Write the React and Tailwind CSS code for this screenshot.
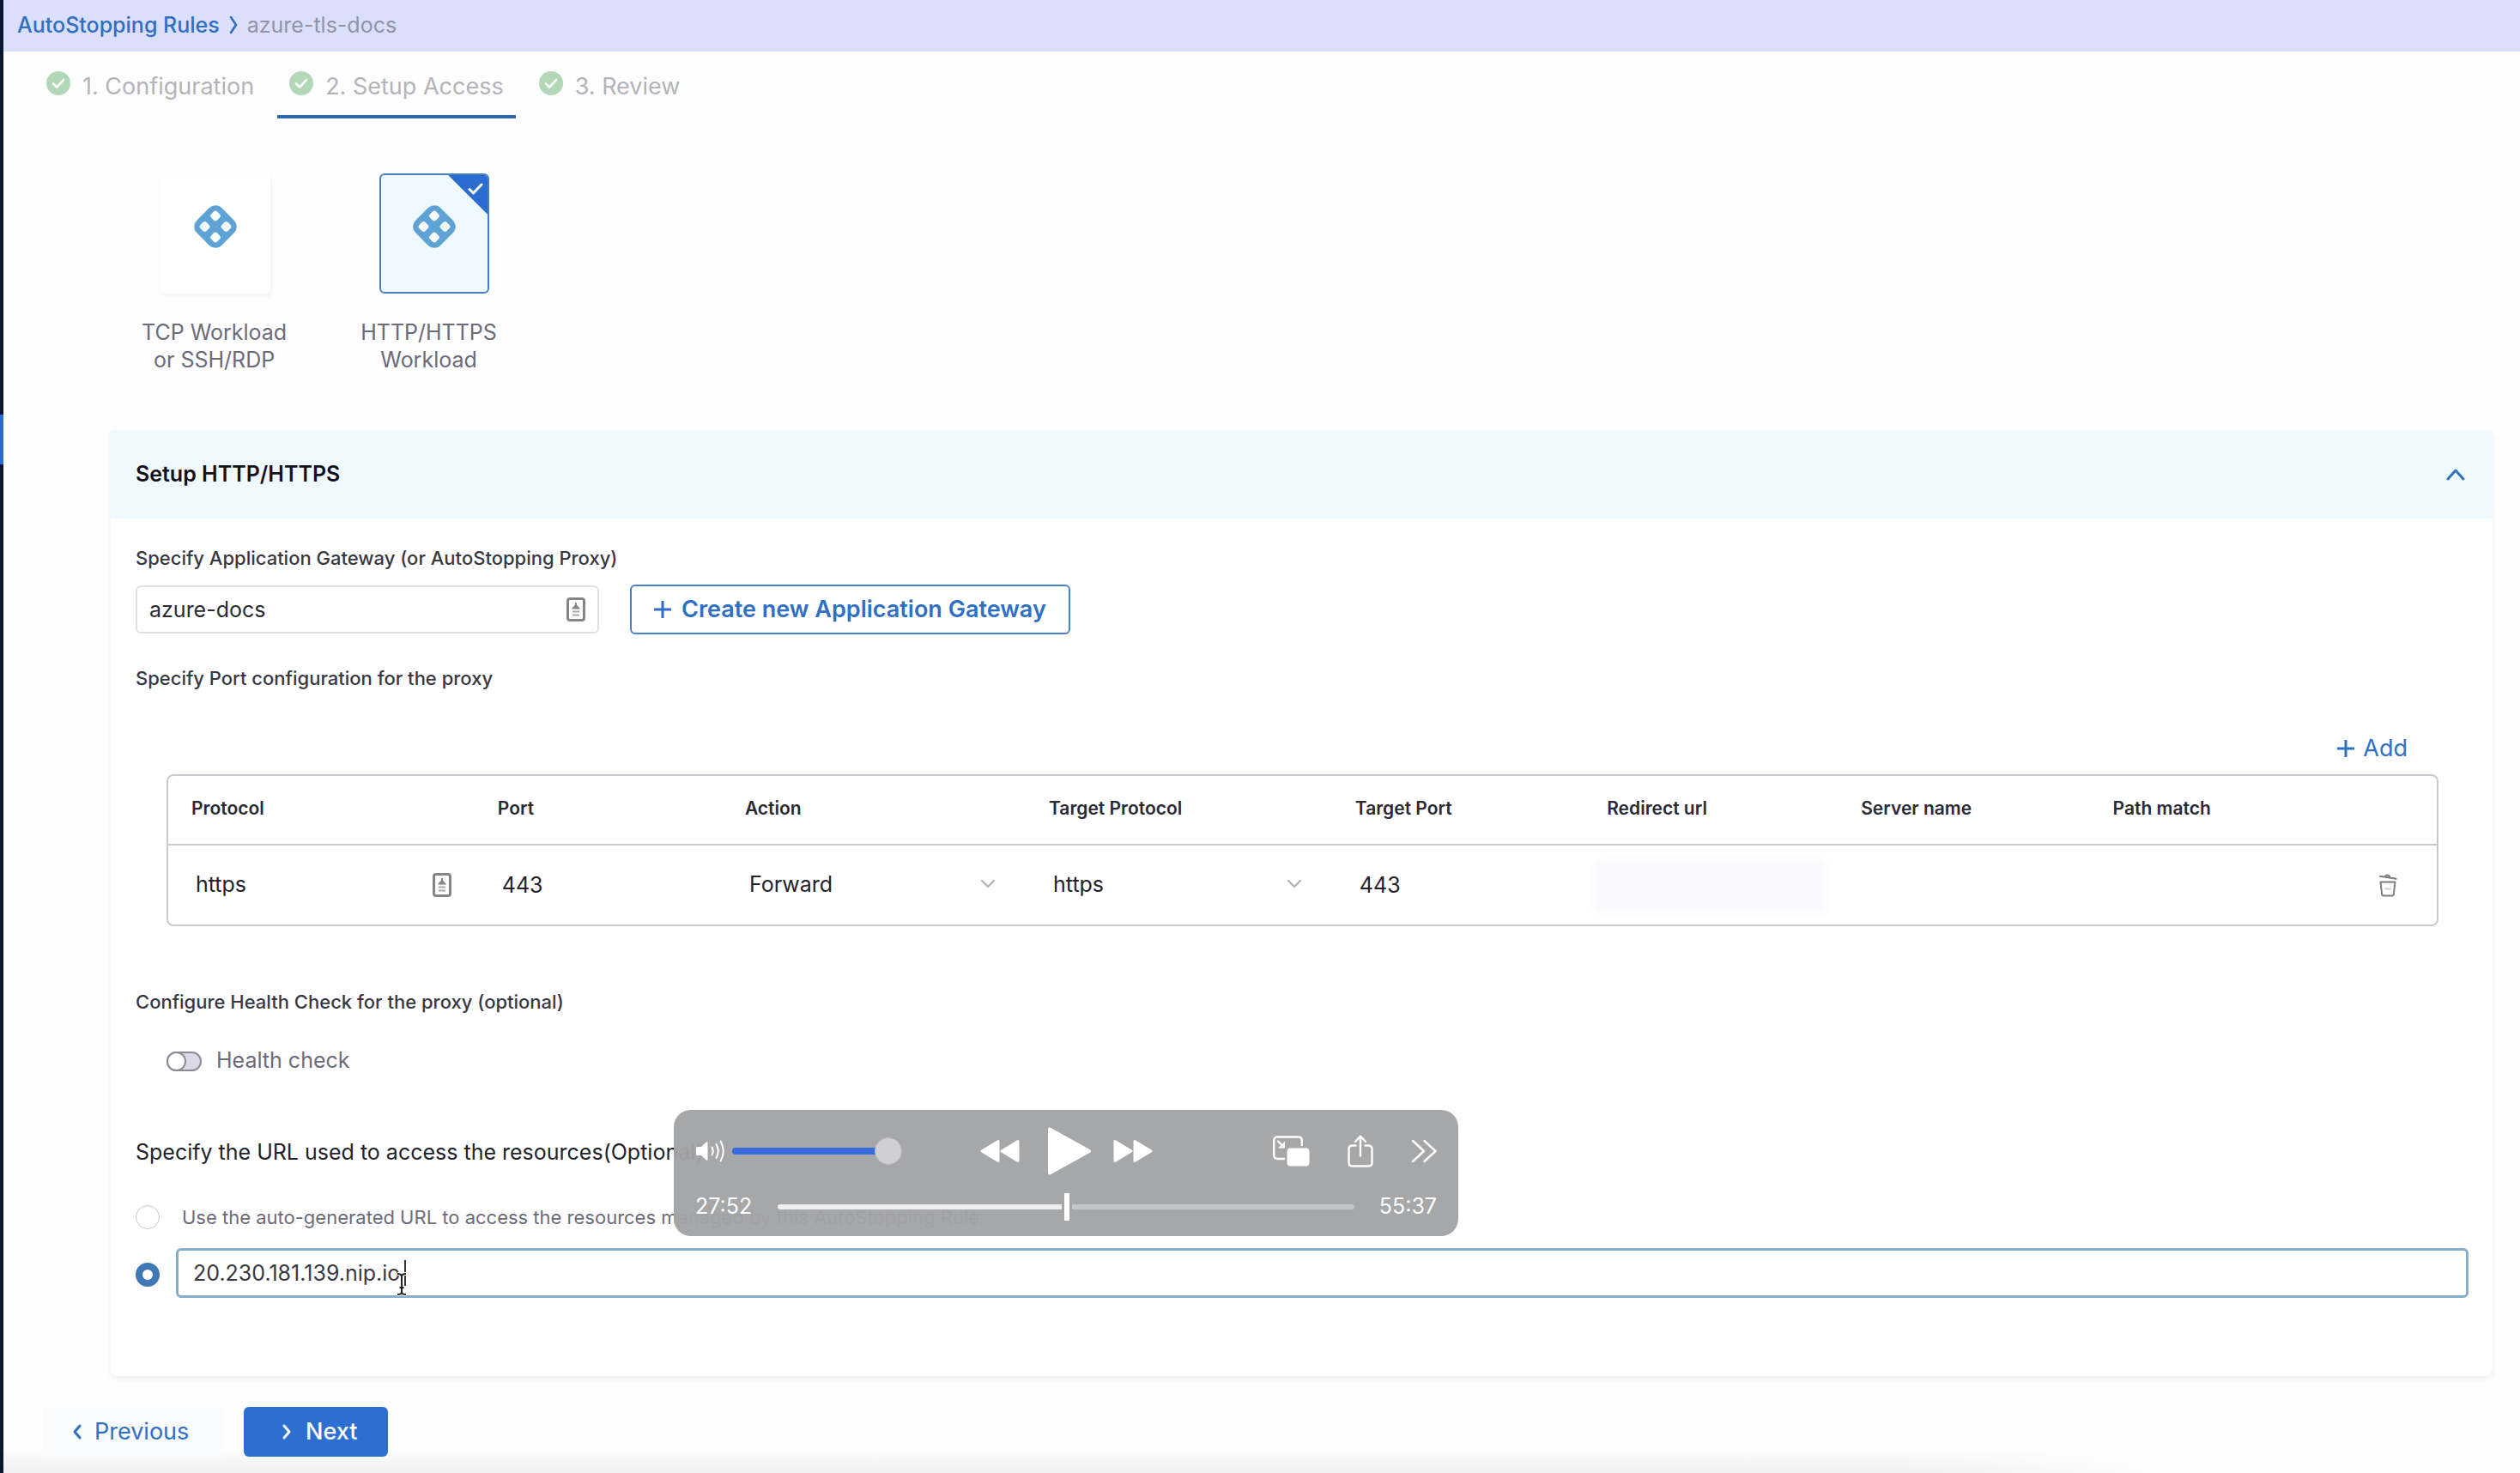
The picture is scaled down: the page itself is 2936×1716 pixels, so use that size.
import React from 'react';

function Plus({ className }) {
  return (
    <svg viewBox="0 0 20 20" className={className} fill="none" stroke="currentColor" strokeWidth="3" aria-hidden="true">
      <path d="M10 0v20M0 10h20" />
    </svg>
  );
}

function Chevron({ className, d, width = 3 }) {
  return (
    <svg viewBox="0 0 24 24" className={className} fill="none" stroke="currentColor" strokeWidth={width} strokeLinecap="round" strokeLinejoin="round" aria-hidden="true">
      <path d={d} />
    </svg>
  );
}

function StepCheck() {
  return (
    <svg viewBox="0 0 28 28" className="size-7 shrink-0" aria-hidden="true">
      <circle cx="14" cy="14" r="14" fill="#b3d8b8" />
      <path d="M8 14.5l4.2 4.2L20 10" fill="none" stroke="#fff" strokeWidth="2.6" strokeLinecap="round" strokeLinejoin="round" />
    </svg>
  );
}

function WorkloadIcon() {
  return (
    <svg viewBox="0 0 50 50" className="size-[50px]" aria-hidden="true">
      <rect x="4.5" y="4.5" width="41" height="41" rx="10" fill="#5fa3d6" transform="rotate(45 25 25)" />
      <g fill="#f8fdff">
        <rect x="20" y="7.5" width="10" height="10" rx="3" transform="rotate(45 25 12.5)" />
        <rect x="20" y="32.5" width="10" height="10" rx="3" transform="rotate(45 25 37.5)" />
        <rect x="7.5" y="20" width="10" height="10" rx="3" transform="rotate(45 12.5 25)" />
        <rect x="32.5" y="20" width="10" height="10" rx="3" transform="rotate(45 37.5 25)" />
      </g>
    </svg>
  );
}

function AutofillIcon({ className }) {
  return (
    <svg viewBox="0 0 22 28" className={className} fill="none" stroke="#858587" aria-hidden="true">
      <rect x="1.5" y="1.5" width="19" height="25" rx="2.5" strokeWidth="3" />
      <path d="M11 6v4M8 12.5L11 9l3 3.500z" strokeWidth="2" fill="#858587" />
      <path d="M7 16.5h8M7 20.5h8" strokeWidth="2" stroke="#a9a9ab" />
    </svg>
  );
}

function TrashIcon() {
  return (
    <svg viewBox="0 0 22 30" className="h-[30px] w-[22px]" fill="none" stroke="#7d7d84" strokeWidth="2" strokeLinecap="round" strokeLinejoin="round" aria-hidden="true">
      <path d="M2.5 11.5h17l-1.600 14.200a2 2 0 0 1-2 1.800H6.100a2 2 0 0 1-2-1.800z" />
      <path d="M2 4.800l18.500 3M8 5.500c.5-2.600 4.500-3 5.500.8" />
      <path d="M8 19.500h6" stroke="#cfcfd4" />
    </svg>
  );
}

const STEPS = ['1. Configuration', '2. Setup Access', '3. Review'];

function Stepper() {
  return (
    <nav aria-label="Steps" className="flex gap-[13px] pl-9 text-[27px] text-[#b3b3b9]">
      {STEPS.map((step, i) => (
        <button
          key={step}
          type="button"
          aria-current={i === 1 ? 'step' : undefined}
          className={
            'flex h-[78px] items-center gap-3.5 border-b-4 px-3.5 ' +
            (i === 1 ? 'border-[#2f66b0]' : 'border-transparent')
          }
        >
          <StepCheck />
          <span className="pt-2">{step}</span>
        </button>
      ))}
    </nav>
  );
}

function WorkloadOption({ lines, selected }) {
  return (
    <button type="button" aria-pressed={selected} className="flex flex-col leading-8 text-[#6b6b7b]">
      <span
        className={
          'relative ml-[22px] flex h-[140px] w-32 justify-center overflow-hidden rounded-md border-2 pt-[35px] ' +
          (selected
            ? 'border-[#4a7fc4] bg-[#eff8fe]'
            : 'border-transparent bg-white shadow-[2px_3px_4px_rgba(40,41,61,0.06)]')
        }
      >
        <WorkloadIcon />
        {selected && (
          <span className="absolute top-0 right-0 size-[46px] bg-[#2b6cd0] [clip-path:polygon(0_0,100%_0,100%_100%)]">
            <Chevron className="absolute top-1 right-0.5 size-6 text-white" d="M5 12.500l4.500 4.500L19 7" />
          </span>
        )}
      </span>
      <span className="mt-[29px] w-full text-center">
        {lines[0]}
        <br />
        {lines[1]}
      </span>
    </button>
  );
}

function CellSelect({ label, value, children }) {
  return (
    <div className="relative flex items-center">
      <select aria-label={label} defaultValue={value} className="h-14 w-full appearance-none bg-transparent">
        <option>{value}</option>
      </select>
      {children}
    </div>
  );
}

function CellInput({ label, value = '', className = '' }) {
  return <input aria-label={label} defaultValue={value} className={'h-14 w-full outline-none ' + className} />;
}

const COLUMNS = [
  ['Protocol', 'w-[13.5%]'],
  ['Port', 'w-[10.9%]'],
  ['Action', 'w-[13.4%]'],
  ['Target Protocol', 'w-[13.5%]'],
  ['Target Port', 'w-[11.1%]'],
  ['Redirect url', 'w-[11.2%]'],
  ['Server name', 'w-[11.1%]'],
  ['Path match', 'w-[10%]'],
];

function PortTable() {
  const down = <Chevron className="pointer-events-none absolute right-8 size-6 text-[#b5b5bb]" d="M5 7l7 7 7-7" width={2.4} />;
  return (
    <div className="mt-3.5 overflow-hidden rounded-lg border-2 border-[#c9c9cf]">
      <table className="w-full table-fixed text-left">
        <thead>
          <tr className="h-20 border-b-2 border-[#c9c9cf]">
            {COLUMNS.map(([name, width]) => (
              <th key={name} scope="col" className={'pb-1 pl-[27px] text-[21px] font-semibold text-[#2a2a35] ' + width}>
                {name}
              </th>
            ))}
            <th aria-label="Delete" />
          </tr>
        </thead>
        <tbody>
          <tr className="h-[93px] text-[#22222a]">
            <td className="pl-8">
              <CellSelect label="Protocol" value="https">
                <AutofillIcon className="pointer-events-none absolute right-[27px] h-7 w-[22px]" />
              </CellSelect>
            </td>
            <td className="pl-8"><CellInput label="Port" value="443" /></td>
            <td className="pl-8"><CellSelect label="Action" value="Forward">{down}</CellSelect></td>
            <td className="pl-8"><CellSelect label="Target Protocol" value="https">{down}</CellSelect></td>
            <td className="pl-8"><CellInput label="Target Port" value="443" /></td>
            <td className="px-4 pt-1"><CellInput label="Redirect url" className="rounded bg-[#fafafd] shadow-[0_0_8px_4px_#fafafd]" /></td>
            <td className="pl-8"><CellInput label="Server name" /></td>
            <td className="pl-8"><CellInput label="Path match" /></td>
            <td className="pr-[46px]">
              <button type="button" aria-label="Delete row" className="ml-auto block"><TrashIcon /></button>
            </td>
          </tr>
        </tbody>
      </table>
    </div>
  );
}

const RADIO = 'size-7 shrink-0 appearance-none rounded-full bg-white ';

function Player() {
  return (
    <section aria-label="Video controls" className="absolute top-[1293px] left-[785px] w-[914px] rounded-[20px] bg-[#a2a3a5]/96 px-[25px] pt-5 pb-[18px] text-white">
      <div className="flex h-14 items-center">
        <button type="button" aria-label="Mute">
          <svg viewBox="0 0 36 28" className="h-7 w-9" fill="none" stroke="#fff" strokeWidth="2" strokeLinecap="round" aria-hidden="true">
            <path d="M1 10.500q0-1.500 1.500-1.500H7l6-5.500q1.500-1 1.500.8v19.400q0 1.800-1.500.8L7 19H2.500Q1 19 1 17.500z" fill="#fff" stroke="none" />
            <path d="M19.500 9.500q2.500 4.500 0 9M24.500 6q4.500 8 0 16M29.500 2.500q6.500 11.500 0 23" />
          </svg>
        </button>
        <input
          type="range"
          aria-label="Volume"
          defaultValue="100"
          className="ml-[7px] h-8 w-[198px] appearance-none bg-transparent [&::-webkit-slider-runnable-track]:h-2 [&::-webkit-slider-runnable-track]:rounded-full [&::-webkit-slider-runnable-track]:bg-[#386ce0] [&::-webkit-slider-thumb]:-mt-3 [&::-webkit-slider-thumb]:size-8 [&::-webkit-slider-thumb]:appearance-none [&::-webkit-slider-thumb]:rounded-full [&::-webkit-slider-thumb]:border [&::-webkit-slider-thumb]:border-[#b9b9bb] [&::-webkit-slider-thumb]:bg-[#d0d0d2]"
        />
        <button type="button" aria-label="Rewind" className="ml-[91px]">
          <svg viewBox="0 0 46 28" className="h-7 w-[46px]" fill="#fff" stroke="#fff" strokeWidth="3" strokeLinejoin="round" aria-hidden="true">
            <path d="M21 2.500v23L2 14zM44 2.500v23L25 14z" />
          </svg>
        </button>
        <button type="button" aria-label="Play" className="ml-[33px]">
          <svg viewBox="0 0 50 56" className="h-14 w-[50px]" fill="#fff" stroke="#fff" strokeWidth="4" strokeLinejoin="round" aria-hidden="true">
            <path d="M2 2.500v51L48 28z" />
          </svg>
        </button>
        <button type="button" aria-label="Fast forward" className="ml-[26px]">
          <svg viewBox="0 0 46 28" className="h-7 w-[46px]" fill="#fff" stroke="#fff" strokeWidth="3" strokeLinejoin="round" aria-hidden="true">
            <path d="M2 2.500v23L21 14zM25 2.500v23L44 14z" />
          </svg>
        </button>
        <div className="ml-auto flex items-center">
          <button type="button" aria-label="Picture in picture">
            <svg viewBox="0 0 43 36" className="h-9 w-[43px]" fill="none" stroke="#fff" strokeWidth="2.400" aria-hidden="true">
              <path d="M14 27H5.500Q1.200 27 1.200 22.800V5.700Q1.200 1.500 5.500 1.500h24Q33.800 1.500 33.800 5.700V12" />
              <rect x="16.500" y="14.500" width="26" height="21" rx="4" fill="#fff" stroke="none" />
              <path d="M6 6.500l5 5" strokeLinecap="round" />
              <path d="M14 6.500v8H6z" fill="#fff" stroke="none" />
            </svg>
          </button>
          <button type="button" aria-label="Share" className="ml-11">
            <svg viewBox="0 0 30 38" className="h-[38px] w-[30px]" fill="none" stroke="#fff" strokeWidth="2.400" strokeLinecap="round" strokeLinejoin="round" aria-hidden="true">
              <path d="M9.500 12.500H5.500Q1.500 12.500 1.500 16.500v16Q1.500 36.500 5.500 36.500h19q4 0 4-4v-16q0-4-4-4h-4" />
              <path d="M15 24.500V2M9 8l6-6.300L21 8" />
            </svg>
          </button>
          <button type="button" aria-label="More controls" className="ml-11">
            <svg viewBox="0 0 30 28" className="h-7 w-[30px]" fill="none" stroke="#fff" strokeWidth="2.400" strokeLinecap="round" strokeLinejoin="round" aria-hidden="true">
              <path d="M2 2l13 12L2 26M15.500 2l13 12-13 12" />
            </svg>
          </button>
        </div>
      </div>
      <div className="mt-[21px] flex h-8 items-center justify-between">
        <span>27:52</span>
        <input
          type="range"
          aria-label="Seek"
          min="0"
          max="3337"
          defaultValue="1676"
          className="h-8 w-[672px] appearance-none bg-transparent [&::-webkit-slider-runnable-track]:h-1.5 [&::-webkit-slider-runnable-track]:rounded-full [&::-webkit-slider-runnable-track]:bg-[linear-gradient(to_right,#efeff0_50%,#c4c5c7_50%)] [&::-webkit-slider-thumb]:-mt-[13px] [&::-webkit-slider-thumb]:h-8 [&::-webkit-slider-thumb]:w-3 [&::-webkit-slider-thumb]:appearance-none [&::-webkit-slider-thumb]:border-x-[3px] [&::-webkit-slider-thumb]:border-[#a5a6a8] [&::-webkit-slider-thumb]:bg-white"
        />
        <span>55:37</span>
      </div>
    </section>
  );
}

function TextPointer() {
  return (
    <svg viewBox="0 0 14 28" className="pointer-events-none absolute top-7 left-64 h-7 w-3.5" fill="none" aria-hidden="true">
      <path d="M2 2q5 0 5 3v18q0 3-5 3M12 2q-5 0-5 3v18q0 3 5 3M4.500 18h5" stroke="#fff" strokeWidth="4" />
      <path d="M2 2q5 0 5 3v18q0 3-5 3M12 2q-5 0-5 3v18q0 3 5 3M4.500 18h5" stroke="#222" strokeWidth="2" />
    </svg>
  );
}

export default function App() {
  const label = 'block text-[22px] leading-8 font-medium text-[#383843]';
  return (
    <div className="relative flex min-h-screen bg-[#fefefe] font-['Inter',sans-serif] text-[25px]">
      <div className="w-1 shrink-0 bg-[#0b1730] pt-[483px]">
        <div className="h-[58px] bg-[#2a6bd0]" />
      </div>
      <div className="flex min-w-0 flex-1 flex-col">
        <header className="flex h-[60px] items-center gap-1 bg-[#dcdffa] pb-0.5 pl-4 leading-8">
          <a href="#rules" className="font-medium text-[#2f6fc4]">AutoStopping Rules</a>
          <Chevron className="size-6 text-[#2f6fc4]" d="M9 3l6 9-6 9" width={2.6} />
          <span className="text-[#9293ab]">azure-tls-docs</span>
        </header>
        <Stepper />
        <main className="flex-1">
          <div className="mt-16 ml-[161px] flex gap-[86px]">
            <WorkloadOption lines={['TCP Workload', 'or SSH/RDP']} selected={false} />
            <WorkloadOption lines={['HTTP/HTTPS', 'Workload']} selected />
          </div>

          <section className="mt-[66px] mr-8 ml-[125px] rounded-lg bg-white shadow-[0_3px_6px_rgba(40,41,61,0.08)]">
            <h2>
              <button type="button" aria-expanded="true" className="flex h-[103px] w-full items-center justify-between bg-[#f0f9fd] pr-[31px] pl-[29px] font-semibold text-[#12121c]">
                Setup HTTP/HTTPS
                <Chevron className="size-6 text-[#2f6fc4]" d="M3 17l9-10 9 10" />
              </button>
            </h2>
            <div className="pt-[30px] pr-7 pb-[91px] pl-[29px]">
              <label htmlFor="gateway" className={label}>Specify Application Gateway (or AutoStopping Proxy)</label>
              <div className="mt-[15px] flex items-center gap-9">
                <div className="relative flex w-[540px] items-center">
                  <select id="gateway" defaultValue="azure-docs" className="h-14 w-full appearance-none rounded-md border-2 border-[#dfdfe3] bg-white px-3.5 pt-0.5 text-[#2a2a33]">
                    <option>azure-docs</option>
                  </select>
                  <AutofillIcon className="pointer-events-none absolute right-4 h-7 w-[22px]" />
                </div>
                <button type="button" className="flex h-[58px] items-center gap-3 rounded-md border-2 border-[#4a80c8] px-[26px] text-[27px] font-semibold text-[#2f6fc4]">
                  <Plus className="size-5" />
                  Create new Application Gateway
                </button>
              </div>
              <p className={'mt-[35px] ' + label}>Specify Port configuration for the proxy</p>
              <div className="pr-[35px] pl-9">
                <button type="button" className="mt-[50px] mr-9 ml-auto flex h-8 items-center gap-2.5 text-[27px] text-[#2f6fc4]">
                  <Plus className="size-5" />
                  Add
                </button>
                <PortTable />
              </div>
              <p className={'mt-[72px] ' + label}>Configure Health Check for the proxy (optional)</p>
              <label className="mt-[37px] ml-9 flex h-8 w-fit items-center gap-[17px] text-[#6b6b7b]">
                <input
                  type="checkbox"
                  role="switch"
                  className="relative h-[23px] w-[41px] appearance-none rounded-full border-2 border-[#8c8c99] bg-[#d9dae6] before:absolute before:-top-0.5 before:-left-0.5 before:size-[23px] before:rounded-full before:border-2 before:border-[#8c8c99] before:bg-white"
                />
                Health check
              </label>
              <fieldset className="mt-[74px]">
                <legend className="leading-8 text-[#22222a]">Specify the URL used to access the resources(Optional)</legend>
                <label className="mt-11 flex h-8 items-center gap-[26px] text-[22px] text-[#6b6b7b]">
                  <input type="radio" name="url" className={RADIO + 'border border-[#c9c9d0]'} />
                  Use the auto-generated URL to access the resources managed by this AutoStopping Rule.
                </label>
                <div className="mt-5 flex items-center gap-[19px]">
                  <input type="radio" name="url" defaultChecked aria-label="Use a custom URL" className={RADIO + 'mt-1 border-8 border-[#3f78b5]'} />
                  <div className="relative flex flex-1 items-center">
                    <input aria-label="Custom URL" defaultValue="20.230.181.139.nip.io" className="h-[58px] w-full rounded-md border-[3px] border-[#86aecb] bg-white px-[17px] text-[#383843] outline-none" />
                    <span className="pointer-events-none absolute left-[266px] h-[30px] w-0.5 bg-[#333]" />
                    <TextPointer />
                  </div>
                </div>
              </fieldset>
            </div>
          </section>
        </main>
        <footer className="mt-9 flex bg-[linear-gradient(to_right,transparent_75%,#fefefe_87%),linear-gradient(to_bottom,transparent_60%,#f0f0f0)] pb-[19px] pl-[46px] text-[27px]">
          <button type="button" className="flex h-[58px] w-[210px] items-center gap-2 bg-[#fafbfd] pl-7 text-[#2f6fc4]">
            <Chevron className="size-6" d="M15 5l-6 7 6 7" />
            Previous
          </button>
          <button type="button" className="ml-6 flex h-[58px] w-[168px] items-center gap-2.5 rounded-md bg-[#2c6fd1] pl-[38px] font-medium text-white">
            <Chevron className="size-6" d="M9 5l6 7-6 7" />
            Next
          </button>
        </footer>
      </div>
      <Player />
    </div>
  );
}
